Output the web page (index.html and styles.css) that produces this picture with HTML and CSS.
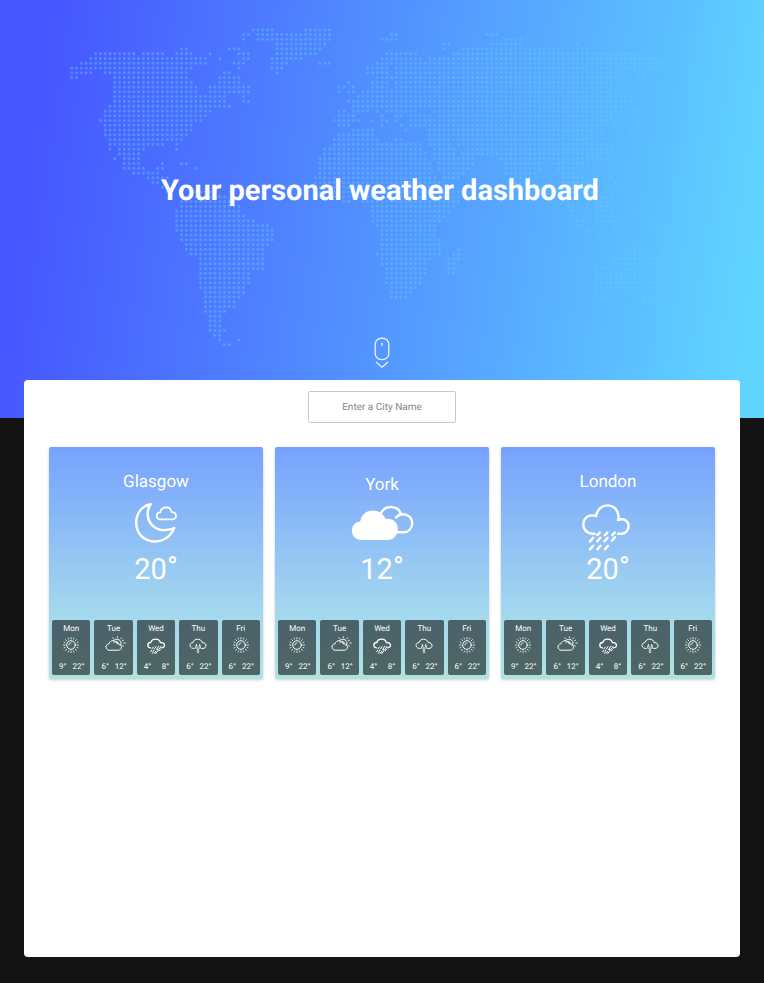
FILE: index.html
```html
<!DOCTYPE html>
<html lang="en">
<head>
<meta charset="utf-8">
<meta name="viewport" content="width=device-width, initial-scale=1">
<title>Your personal weather dashboard</title>
<link rel="stylesheet" href="styles.css">
</head>
<body>
<svg class="sprite" aria-hidden="true">
  <symbol id="sun" viewBox="0 0 24 18">
    <circle cx="12" cy="9" r="4.3"/>
    <path class="light" d="M9.8 9A2.2 2.2 0 0 1 12 6.8M12 1.4v1.6M12 15v1.6M4.4 9h1.6M18 9h1.6M6.6 3.6l1.1 1.1M16.3 13.3l1.1 1.1M6.6 14.4l1.1-1.1M16.3 4.7l1.1-1.1M9.1 2l.4 1M14.9 2l-.4 1M9.1 16l.4-1M14.9 16l-.4-1M5 6.1l1 .4M19 6.1l-1 .4M5 11.9l1-.4M19 11.9l-1-.4"/>
  </symbol>
  <symbol id="partly" viewBox="0 0 24 18">
    <path d="M6.8 14.2C3 14 3 8.2 6.8 7.9C8.2 3.6 14 3.8 15.2 7.8C20.4 7.4 21 14 16.6 14.2Z"/>
    <path d="M11.4 4.6C13.4 2.2 18.8 3 19 6.9C19 8 18.7 8.8 18.2 9.4M11.8 6.6C13.4 5.2 15 5.6 15.6 7.6M14.6 5.4l1.8 1.4"/>
    <path class="light" d="M15.4.6v1.2M10.8 1.7l.7 1M19.6 1.8l-.8 1M21.6 4.2l-1.2.5M23.4 7h-1.6M21.6 10.2l-1-.6"/>
  </symbol>
  <symbol id="storm" viewBox="0 0 24 18">
    <path class="strong" d="M6.4 11.8C2.6 11.2 3.2 6.2 6.8 6.5C7.8 2 15.4 1.8 16.4 6.7C21.4 6 21.8 11.8 17.6 11.9"/>
    <path d="M9.4 11l-1.4 1.8M12 10.6l-1.6 2.4M14.8 10.2l-2.2 3.4h2l-2.8 4M17 10.4l-1.6 2.4M7.8 14.2l-1.2 1.6M10 14.2l-1.2 1.6M9.2 16.4l-.8 1M11.6 15.4l-1.2 1.8M16.4 13.4l-1 1.4"/>
  </symbol>
  <symbol id="drizzle" viewBox="0 0 24 18">
    <path d="M8.4 12.4H7.2C3 12 3 6.6 7 6.6C8 2 15.2 2 16.2 6.6C21.2 6.4 21.2 12.4 17 12.4H15.6"/>
    <path class="light" d="M10.4 8.8c-1.2 2.6-1 3.7 0 3.7s1.1-1.1 0-3.7ZM13.8 8.8c-1.2 2.6-1 3.7 0 3.7s1.1-1.1 0-3.7ZM12 13c-1.2 2.6-1 3.9 0 3.9s1.1-1.3 0-3.9Z"/>
  </symbol>
</svg>

<header class="hero">
  <svg class="map" viewBox="-1 -1 132 69" aria-hidden="true">
    <path d="M38 0h4.1M49 0h5.1
M36 1h1.1M39 1h15.1M67 1h1.1M87 1h2.1
M36 2h.1M39 2h15.1M65 2h3.1M91 2h3.1
M43 3h10.1M78 3h1.1M88 3h6.1M106 3h.1
M23 4h1.1M33 4h2.1M43 4h9.1M78 4h.1M82 4h20.1M106 4h2.1
M5 5h8.1M15 5h4.1M22 5h3.1M29 5h.1M35 5h2.1M43 5h8.1M66 5h6.1M80 5h39.1
M4 6h24.1M31 6h.1M36 6h1.1M42 6h6.1M65 6h8.1M75 6h47.1
M2 7h26.1M34 7h2.1M42 7h3.1M52 7h2.1M64 7h61.1
M0 8h25.1M35 8h.1M42 8h2.1M62 8h4.1M68 8h56.1
M0 9h4.1M7 9h17.1M32 9h1.1M43 9h.1M62 9h4.1M68 9h47.1M119 9h1.1
M0 10h1.1M9 10h15.1M31 10h4.1M64 10h2.1M67 10h47.1M120 10h1.1
M9 11h16.1M31 11h4.1M58 11h.1M63 11h3.1M68 11h45.1M120 11h.1
M9 12h17.1M29 12h8.1M56 12h1.1M59 12h.1M63 12h3.1M68 12h45.1M115 12h.1M121 12h.1
M9 13h17.1M29 13h8.1M56 13h.1M58 13h1.1M61 13h55.1
M9 14h23.1M36 14h.1M60 14h56.1
M9 15h23.1M36 15h1.1M58 15h59.1
M8 16h25.1M59 16h56.1
M7 17h22.1M56 17h1.1M59 17h3.1M64 17h.1M66 17h6.1M76 17h39.1M118 17h1.1
M7 18h21.1M56 18h3.1M65 18h.1M68 18h1.1M71 18h4.1M77 18h36.1
M6 19h21.1M55 19h5.1M63 19h.1M65 19h1.1M68 19h.1M71 19h43.1M118 19h1.1
M7 20h18.1M56 20h2.1M65 20h.1M69 20h.1M71 20h40.1M114 20h.1M119 20h.1
M7 21h18.1M59 21h4.1M70 21h.1M75 21h36.1M115 21h.1M117 21h2.1
M7 22h17.1M56 22h7.1M75 22h36.1
M8 23h15.1M55 23h9.1M68 23h1.1M75 23h36.1
M8 24h11.1M22 24h.1M55 24h18.1M75 24h4.1M81 24h32.1
M8 25h.1M10 25h5.1M22 25h.1M53 25h20.1M76 25h4.1M83 25h30.1
M10 26h4.1M53 26h21.1M76 26h4.1M82 26h30.1
M9 27h.1M11 27h3.1M52 27h22.1M76 27h8.1M90 27h22.1M113 27h.1
M11 28h3.1M19 28h.1M23 28h1.1M52 28h23.1M77 28h7.1M91 28h8.1M101 28h7.1
M11 29h4.1M18 29h1.1M26 29h.1M52 29h23.1M77 29h6.1M91 29h7.1M102 29h4.1
M13 30h5.1M52 30h23.1M78 30h4.1M91 30h6.1M103 30h2.1M113 30h.1
M16 31h4.1M51 31h25.1M78 31h3.1M92 31h4.1M103 31h4.1M113 31h.1
M17 32h1.1M51 32h26.1M92 32h3.1M103 32h5.1M114 32h.1
M19 33h1.1M51 33h26.1M92 33h2.1M104 33h3.1M114 33h1.1
M20 34h1.1M25 34h5.1M52 34h30.1M96 34h.1M104 34h1.1M112 34h1.1
M23 35h9.1M53 35h28.1M103 35h1.1M111 35h2.1
M23 36h11.1M57 36h1.1M61 36h20.1M104 36h.1M110 36h3.1
M23 37h12.1M63 37h17.1M104 37h1.1M110 37h2.1
M22 38h13.1M63 38h16.1M105 38h.1M110 38h3.1M118 38h.1
M22 39h14.1M63 39h15.1M105 39h1.1M110 39h3.1
M22 40h16.1M63 40h14.1M106 40h1.1M110 40h4.1M121 40h1.1
M22 41h19.1M64 41h12.1M106 41h1.1M114 41h.1M121 41h4.1
M22 42h20.1M65 42h11.1M108 42h.1M123 42h3.1
M23 43h19.1M65 43h11.1M110 43h1.1M123 43h3.1
M23 44h19.1M65 44h12.1M125 44h1.1
M24 45h17.1M65 45h12.1M119 45h1.1
M24 46h16.1M65 46h12.1M81 46h.1M117 46h3.1M124 46h.1
M25 47h15.1M64 47h13.1M80 47h1.1M116 47h5.1M124 47h.1
M27 48h13.1M65 48h10.1M79 48h2.1M114 48h11.1
M27 49h13.1M65 49h9.1M79 49h1.1M113 49h12.1
M27 50h13.1M66 50h8.1M79 50h1.1M110 50h16.1
M27 51h10.1M66 51h8.1M79 51h1.1M110 51h16.1
M27 52h10.1M66 52h7.1M110 52h16.1
M27 53h10.1M66 53h7.1M110 53h16.1
M27 54h9.1M67 54h5.1M110 54h16.1
M28 55h8.1M67 55h4.1M110 55h15.1
M28 56h7.1M67 56h3.1M110 56h2.1M120 56h5.1
M28 57h6.1M120 57h4.1
M28 58h6.1M121 58h1.1
M28 59h4.1M29 60h2.1M121 60h.1M29 61h2.1M127 61h.1M29 62h2.1M125 62h1.1M29 63h3.1
M30 64h1.1M31 65h.1M35 65h.1M32 66h1.1"/>
  </svg>
  <h1>Your personal weather dashboard</h1>
  <a class="scroll" href="#cities" aria-label="Scroll to cities">
    <svg viewBox="0 0 16 32" aria-hidden="true">
      <rect x="1.2" y="1.2" width="13.6" height="21.4" rx="6.2"/>
      <path d="M8 6.2v2.2M2.4 25.2L8 30.2L13.6 25.2"/>
    </svg>
  </a>
</header>

<main class="panel">
  <form class="search">
    <input type="text" aria-label="City name" placeholder="Enter a City Name">
  </form>
  <section class="cities" id="cities">
    <article class="card">
      <div class="now">
        <h2>Glasgow</h2>
        <svg class="icon" viewBox="0 0 64 60" aria-hidden="true">
          <path d="M26.8 12.1C17.8 25 28.8 44.6 50.2 36C42 56.6 12.2 52.8 12.2 30.4C12.2 20.8 18.4 13.6 26.8 12.1Z"/>
          <path class="fine" d="M36.2 27.4C31.6 27 31.6 20.4 36.4 20.4C37.6 13.6 46.4 13.6 47.6 20.2C53.4 20.4 53.2 27.2 48.6 27.4Z"/>
        </svg>
        <p class="temp">20<span class="degree">°</span></p>
      </div>
      <ul class="days">
        <li><h3>Mon</h3><svg><use href="#sun"/></svg><p><span>9°</span><span>22°</span></p></li>
        <li><h3>Tue</h3><svg><use href="#partly"/></svg><p><span>6°</span><span>12°</span></p></li>
        <li><h3>Wed</h3><svg><use href="#storm"/></svg><p><span>4°</span><span>8°</span></p></li>
        <li><h3>Thu</h3><svg><use href="#drizzle"/></svg><p><span>6°</span><span>22°</span></p></li>
        <li><h3>Fri</h3><svg><use href="#sun"/></svg><p><span>6°</span><span>22°</span></p></li>
      </ul>
    </article>
    <article class="card">
      <div class="now">
        <h2>York</h2>
        <svg class="icon icon-low" viewBox="0 0 64 57" aria-hidden="true">
          <path d="M31 18C35.8 9.2 48.8 10.6 51 19.2M46 22.6C51.4 16.4 62.2 19.6 62.2 28.4C62.2 33.4 58.4 37.3 53.6 37.3H45"/>
          <path class="solid" d="M10.5 45C-1 44-.8 27.8 10.2 26.6C12 13 30.2 11.6 35.6 23.8C43.4 22.8 47.8 27.6 47.8 34C47.8 40.2 43.6 45 37.6 45Z"/>
        </svg>
        <p class="temp">12<span class="degree">°</span></p>
      </div>
      <ul class="days">
        <li><h3>Mon</h3><svg><use href="#sun"/></svg><p><span>9°</span><span>22°</span></p></li>
        <li><h3>Tue</h3><svg><use href="#partly"/></svg><p><span>6°</span><span>12°</span></p></li>
        <li><h3>Wed</h3><svg><use href="#storm"/></svg><p><span>4°</span><span>8°</span></p></li>
        <li><h3>Thu</h3><svg><use href="#drizzle"/></svg><p><span>6°</span><span>22°</span></p></li>
        <li><h3>Fri</h3><svg><use href="#sun"/></svg><p><span>6°</span><span>22°</span></p></li>
      </ul>
    </article>
    <article class="card">
      <div class="now">
        <h2>London</h2>
        <svg class="icon" viewBox="0 0 64 60" aria-hidden="true">
          <path d="M18.6 41.8H16.4C4 41 4.4 23.2 16.4 23.4Q18.4 23.4 20 24.2C22 9.6 41.6 9.8 42.6 24.6Q42.7 26.4 42 28.2C48.8 25.2 52.6 30 52.6 33.8C52.6 38.6 49.2 41.8 45.4 41.8H42"/>
          <path d="M23.8 40.6l-2.6 2.6M31.4 40.6l-2.6 2.6M38.8 40.6l-2.6 2.6M17.2 45.8l-3.2 3.6M24.4 45.8l-3.2 3.6M31.6 45.8l-3.2 3.6M39 45.2l-3.2 3.6M17.2 53.8l-3.2 3.6M24.6 53.8l-3.2 3.6M32 53.8l-3.2 3.6"/>
        </svg>
        <p class="temp">20<span class="degree">°</span></p>
      </div>
      <ul class="days">
        <li><h3>Mon</h3><svg><use href="#sun"/></svg><p><span>9°</span><span>22°</span></p></li>
        <li><h3>Tue</h3><svg><use href="#partly"/></svg><p><span>6°</span><span>12°</span></p></li>
        <li><h3>Wed</h3><svg><use href="#storm"/></svg><p><span>4°</span><span>8°</span></p></li>
        <li><h3>Thu</h3><svg><use href="#drizzle"/></svg><p><span>6°</span><span>22°</span></p></li>
        <li><h3>Fri</h3><svg><use href="#sun"/></svg><p><span>6°</span><span>22°</span></p></li>
      </ul>
    </article>
  </section>
</main>
</body>
</html>
```

FILE: styles.css
```css
* {
  box-sizing: border-box;
  margin: 0;
  padding: 0;
}

body {
  display: flex;
  flex-direction: column;
  min-height: 100vh;
  background: #131313;
  color: #fff;
  font-family: Roboto, "Liberation Sans", sans-serif;
  text-rendering: geometricPrecision;
}

.sprite {
  position: absolute;
  width: 0;
  height: 0;
}

svg {
  fill: none;
  stroke: #fff;
  stroke-linecap: round;
  stroke-linejoin: round;
}

.hero {
  display: grid;
  grid-template-rows: 312px auto;
  justify-items: center;
  padding: 25px 24px 49px;
  background: linear-gradient(98deg, #4657ff 7%, #60d6ff 98%);
}

.map {
  grid-area: 1 / 1 / 3 / 2;
  width: 630px;
  max-width: 100%;
  stroke: #66ccff;
  stroke-width: 0.64;
  stroke-dasharray: 0 1;
  opacity: 0.4;
}

h1 {
  z-index: 1;
  grid-area: 1 / 1;
  align-self: center;
  padding: 20px 4px 0 0;
  font-size: 29px;
  line-height: 36px;
  font-weight: 700;
  text-align: center;
}

.scroll {
  z-index: 1;
  grid-area: 2 / 1;
  height: 32px;
}

.scroll svg {
  display: block;
  width: 16px;
  height: 32px;
  stroke-width: 1.4;
  opacity: 0.85;
}

.panel {
  flex: 1;
  margin: -38px 24px 26px;
  padding: 11px 25px 24px;
  background: #fff;
  border-radius: 4px;
}

.search {
  display: flex;
  justify-content: center;
  margin-bottom: 24px;
}

.search input {
  width: 148px;
  height: 32px;
  border: 1px solid #c8c8c8;
  border-radius: 2px;
  background: #fff;
  color: #333;
  font: 10px Roboto, "Liberation Sans", sans-serif;
  text-rendering: inherit;
  text-align: center;
}

.search input::placeholder {
  color: #858585;
  opacity: 1;
}

.cities {
  display: grid;
  grid-template-columns: repeat(auto-fit, minmax(200px, 1fr));
  gap: 12px;
}

.card {
  display: flex;
  flex-direction: column;
  padding: 25px 3px 4px;
  border-radius: 2px;
  background: linear-gradient(#76a2ff, #a3d7ee 70%, #afe3e0);
  box-shadow: 0 1px 3px rgba(0, 0, 0, 0.2);
}

.now {
  display: flex;
  flex: 1;
  flex-direction: column;
  align-items: center;
  justify-content: flex-end;
  padding-bottom: 32px;
}

h2 {
  font-size: 17px;
  line-height: 20px;
  font-weight: 400;
}

.icon {
  width: 64px;
  height: 60px;
  stroke-width: 2.4;
}

.icon-low {
  height: 57px;
}

.icon .fine {
  stroke-width: 1.8;
}

.icon .solid {
  fill: #fff;
  stroke: none;
}

.temp {
  font-size: 29px;
  line-height: 36px;
}

.degree {
  line-height: 1;
  vertical-align: 2px;
}

.days {
  display: grid;
  grid-template-columns: repeat(5, 1fr);
  gap: 4px;
  list-style: none;
}

.days li {
  display: flex;
  flex-direction: column;
  align-items: center;
  padding: 4px 0 3px;
  border-radius: 2px;
  background: rgba(0, 0, 0, 0.55);
  font-size: 8px;
  line-height: 10px;
}

.days h3 {
  font-size: 8px;
  font-weight: 400;
}

.days svg {
  width: 24px;
  height: 18px;
  margin: 2px 0 8px;
  stroke-width: 1;
}

.light {
  stroke-width: 0.8;
}

.strong {
  stroke-width: 1.3;
}

.days p {
  display: flex;
  align-self: stretch;
  justify-content: space-between;
  padding: 0 6px 0 7px;
}
```
